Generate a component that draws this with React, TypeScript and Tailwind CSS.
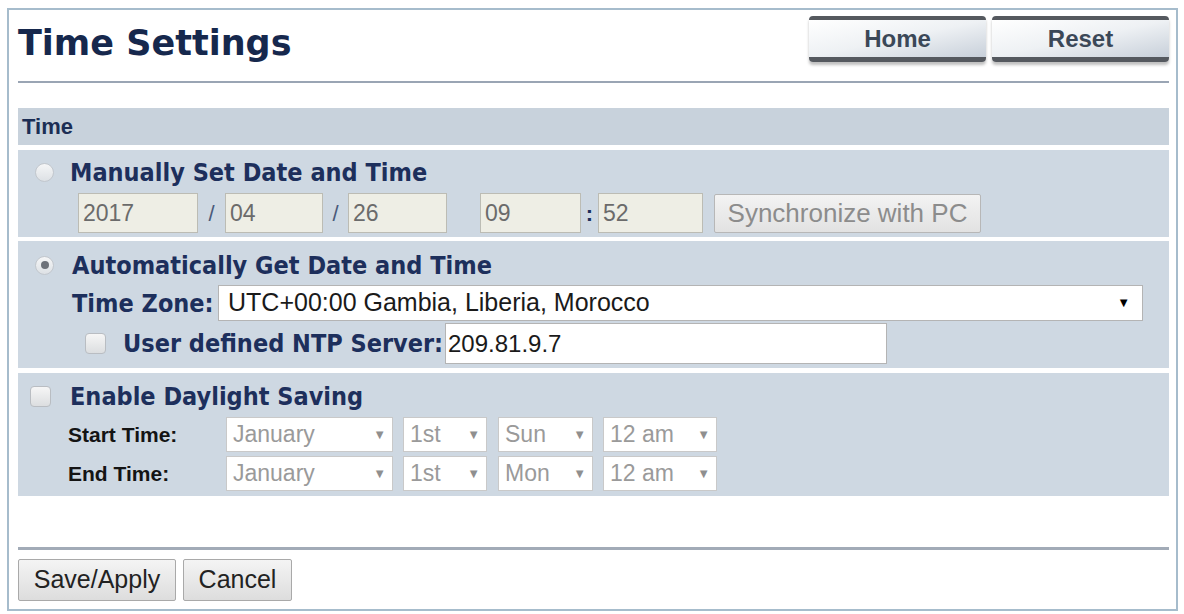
import React from "react";

const labelFont =
  "font-['DejaVu_Sans_Condensed','DejaVu_Sans',sans-serif] font-bold font-stretch-condensed text-[25px] text-[#1d2f5c] leading-none whitespace-nowrap";

function Radio({ checked }: { checked?: boolean }) {
  return (
    <span className="w-[19px] h-[19px] rounded-full border border-[#c2c7cd] bg-gradient-to-b from-[#f5f6f7] to-[#dde1e5] flex items-center justify-center shrink-0">
      {checked && <span className="w-[8px] h-[8px] rounded-full bg-[#6d727a]" />}
    </span>
  );
}

function Check() {
  return (
    <span className="w-[21px] h-[21px] rounded-[4px] border border-[#b9bdc2] bg-gradient-to-b from-[#f6f6f6] to-[#dcdee0] shrink-0" />
  );
}

function Field({ value, className }: { value: string; className: string }) {
  return (
    <div
      className={`${className} h-full border border-[#bcbcb4] bg-[#eeeee5] text-[#6b6b6b] text-[23px] pl-[4px] flex items-center`}
    >
      {value}
    </div>
  );
}

function Sel({ value, className }: { value: string; className: string }) {
  return (
    <div
      className={`${className} h-full border border-[#c9c9c9] bg-white text-[#9a9a9a] text-[23px] pl-[6px] pr-[6px] flex items-center justify-between`}
    >
      <span>{value}</span>
      <span className="text-[13px] text-[#8f8f8f]">▼</span>
    </div>
  );
}

export default function App() {
  return (
    <div className="w-[1184px] h-[614px] bg-white pt-[8px] pl-[7px] font-['Liberation_Sans',Arial,sans-serif]">
      <div className="w-[1171px] h-[603px] border-2 border-[#a6bccc] pl-[9px] pr-[7px] flex flex-col">
        {/* Header */}
        <div className="h-[71px] flex items-start justify-between">
          <h1 className="mt-[13px] font-['DejaVu_Sans',sans-serif] font-bold text-[35px] leading-[40px] text-[#16284d]">
            Time Settings
          </h1>
          <div className="mt-[6px] flex gap-[6px]">
            {["Home", "Reset"].map((t) => (
              <div
                key={t}
                className="w-[177px] h-[46px] rounded-[4px] border-t-[4px] border-b-[5px] border-[#55595f] bg-gradient-to-br from-white via-[#eef1f4] to-[#c8d0da] shadow-[0_3px_3px_rgba(0,0,0,0.25)] flex items-center justify-center font-bold text-[24px] text-[#3b4858]"
              >
                {t}
              </div>
            ))}
          </div>
        </div>
        <div className="h-[2px] bg-[#9aa5b4]" />

        {/* Time section header */}
        <div className="mt-[25px] h-[37px] bg-[#c8d2dc] pl-[4px] flex items-center font-bold text-[22px] text-[#1c2e55]">
          Time
        </div>

        {/* Manual */}
        <div className="mt-[5px] h-[87px] bg-[#ced8e2] pt-[5px] pb-[4px] flex flex-col">
          <div className="h-[34px] flex items-center pl-[17px]">
            <Radio />
            <span className={`${labelFont} ml-[16px]`}>Manually Set Date and Time</span>
          </div>
          <div className="mt-[4px] h-[40px] flex items-center pl-[60px]">
            <Field value="2017" className="w-[120px]" />
            <span className="w-[27px] text-center text-[22px] text-[#4a5a7a]">/</span>
            <Field value="04" className="w-[98px]" />
            <span className="w-[25px] text-center text-[22px] text-[#4a5a7a]">/</span>
            <Field value="26" className="w-[99px]" />
            <span className="w-[33px]" />
            <Field value="09" className="w-[101px]" />
            <span className="w-[17px] text-center font-bold text-[22px] text-[#1d2f5c]">:</span>
            <Field value="52" className="w-[105px]" />
            <div className="ml-[11px] w-[267px] h-[39px] rounded-[2px] border border-[#b7b7b7] bg-gradient-to-b from-[#f3f3f3] to-[#e2e2e2] flex items-center justify-center text-[26px] text-[#8c8c8c] whitespace-nowrap">
              Synchronize with PC
            </div>
          </div>
        </div>

        {/* Automatic */}
        <div className="mt-[4px] h-[127px] bg-[#ced8e2] pt-[7px] pb-[4px] flex flex-col">
          <div className="h-[34px] flex items-center pl-[17px]">
            <Radio checked />
            <span className={`${labelFont} ml-[18px]`}>Automatically Get Date and Time</span>
          </div>
          <div className="mt-[3px] h-[36px] flex items-center pl-[54px]">
            <span className={`${labelFont} w-[146px]`}>Time Zone:</span>
            <div className="w-[925px] h-full border border-[#b4b4b4] bg-white pl-[9px] pr-[12px] flex items-center justify-between text-[25px] text-[#1a1a1a]">
              <span>UTC+00:00 Gambia, Liberia, Morocco</span>
              <span className="text-[13px] text-black">▼</span>
            </div>
          </div>
          <div className="mt-[2px] h-[41px] flex items-center pl-[67px]">
            <Check />
            <span className={`${labelFont} ml-[17px] w-[322px]`}>User defined NTP Server:</span>
            <div className="w-[442px] h-full border border-[#b4b4b4] bg-white pl-[2px] flex items-center text-[24px] text-[#1a1a1a]">
              209.81.9.7
            </div>
          </div>
        </div>

        {/* Daylight saving */}
        <div className="mt-[5px] h-[123px] bg-[#ced8e2] pt-[6px] pb-[5px] flex flex-col">
          <div className="h-[34px] flex items-center pl-[12px]">
            <Check />
            <span className={`${labelFont} ml-[19px]`}>Enable Daylight Saving</span>
          </div>
          {[
            ["Start Time:", "Sun"],
            ["End Time:", "Mon"],
          ].map(([label, day]) => (
            <div key={label} className="mt-[4px] h-[35px] flex items-center pl-[50px]">
              <span className="w-[158px] font-bold text-[21px] text-[#141414] whitespace-nowrap">{label}</span>
              <Sel value="January" className="w-[167px]" />
              <Sel value="1st" className="ml-[10px] w-[84px]" />
              <Sel value={day} className="ml-[11px] w-[95px]" />
              <Sel value="12 am" className="ml-[10px] w-[114px]" />
            </div>
          ))}
        </div>

        <div className="mt-[51px] h-[3px] bg-[#a2abb7]" />

        <div className="mt-[9px] h-[42px] flex gap-[7px]">
          <button className="w-[158px] h-full rounded-[2px] border border-[#a9a9a9] bg-gradient-to-b from-[#f4f4f4] to-[#dddddd] text-[25px] text-[#222]">
            Save/Apply
          </button>
          <button className="w-[109px] h-full rounded-[2px] border border-[#a9a9a9] bg-gradient-to-b from-[#f4f4f4] to-[#dddddd] text-[25px] text-[#222]">
            Cancel
          </button>
        </div>
      </div>
    </div>
  );
}
